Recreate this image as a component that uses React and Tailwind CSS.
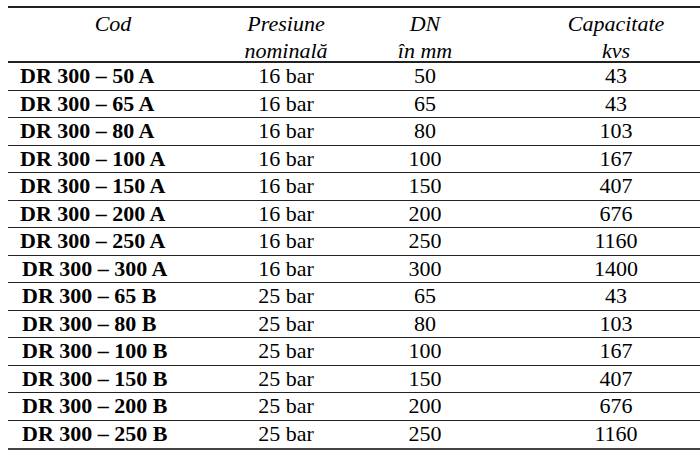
import React from "react";

const rows = [
  ["DR 300 – 50 A", "16 bar", "50", "43"],
  ["DR 300 – 65 A", "16 bar", "65", "43"],
  ["DR 300 – 80 A", "16 bar", "80", "103"],
  ["DR 300 – 100 A", "16 bar", "100", "167"],
  ["DR 300 – 150 A", "16 bar", "150", "407"],
  ["DR 300 – 200 A", "16 bar", "200", "676"],
  ["DR 300 – 250 A", "16 bar", "250", "1160"],
  ["DR 300 – 300 A", "16 bar", "300", "1400"],
  ["DR 300 – 65 B", "25 bar", "65", "43"],
  ["DR 300 – 80 B", "25 bar", "80", "103"],
  ["DR 300 – 100 B", "25 bar", "100", "167"],
  ["DR 300 – 150 B", "25 bar", "150", "407"],
  ["DR 300 – 200 B", "25 bar", "200", "676"],
  ["DR 300 – 250 B", "25 bar", "250", "1160"],
];

const cols = "grid grid-cols-[210px_136px_142px_240px]";

export default function App() {
  return (
    <div
      className="w-[700px] h-[462px] overflow-hidden bg-white pt-[6px] pl-[8px] text-black"
      style={{ fontFamily: '"Liberation Serif", "Times New Roman", serif' }}
    >
      <div className="w-[728px] border-t-2 border-b-2 border-t-[#222] border-b-[#444] text-[22px]">
        {/* Header */}
        <div className={`${cols} h-[55px] border-b-2 border-[#222] pt-[2px] italic leading-[27px] text-center`}>
          <div>Cod</div>
          <div>
            Presiune
            <br />
            nominală
          </div>
          <div>
            DN
            <br />
            în mm
          </div>
          <div>
            Capacitate
            <br />
            kvs
          </div>
        </div>

        {/* Rows */}
        {rows.map((r, i) => (
          <div
            key={r[0]}
            className={`${cols} h-[27.5px] leading-[26px] ${
              i < rows.length - 1 ? "border-b-[1.5px] border-[#222]" : ""
            }`}
          >
            <div className={`font-bold ${i >= 7 ? "pl-[14px]" : "pl-[12px]"}`}>{r[0]}</div>
            <div className="text-center">{r[1]}</div>
            <div className="text-center">{r[2]}</div>
            <div className="text-center">{r[3]}</div>
          </div>
        ))}
      </div>
    </div>
  );
}
